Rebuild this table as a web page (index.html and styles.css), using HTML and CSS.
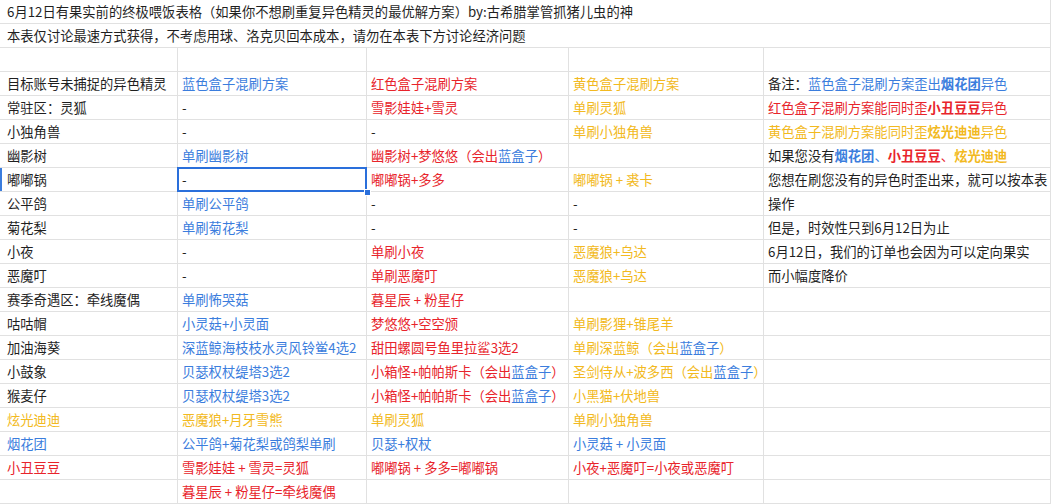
FILE: index.html
```html
<!DOCTYPE html>
<html lang="zh-CN">
<head>
<meta charset="utf-8">
<title>6月12日有果实前的终极喂饭表格</title>
<link rel="stylesheet" href="styles.css">
</head>
<body>
<div class="sheet">
  <div class="c span first">6月12日有果实前的终极喂饭表格（如果你不想刷重复异色精灵的最优解方案）by:古希腊掌管抓猪儿虫的神</div>
  <div class="c span first">本表仅讨论最速方式获得，不考虑用球、洛克贝回本成本，请勿在本表下方讨论经济问题</div>

  <div class="c first"></div><div class="c"></div><div class="c"></div><div class="c"></div><div class="c"></div>

  <div class="c first">目标账号未捕捉的异色精灵</div>
  <div class="c b">蓝色盒子混刷方案</div>
  <div class="c r">红色盒子混刷方案</div>
  <div class="c y">黄色盒子混刷方案</div>
  <div class="c">备注：<span class="b">蓝色盒子混刷方案歪出<strong>烟花团</strong>异色</span></div>

  <div class="c first">常驻区：灵狐</div>
  <div class="c">-</div>
  <div class="c r">雪影娃娃+雪灵</div>
  <div class="c y">单刷灵狐</div>
  <div class="c r">红色盒子混刷方案能同时歪<strong>小丑豆豆</strong>异色</div>

  <div class="c first">小独角兽</div>
  <div class="c">-</div>
  <div class="c">-</div>
  <div class="c y">单刷小独角兽</div>
  <div class="c y">黄色盒子混刷方案能同时歪<strong>炫光迪迪</strong>异色</div>

  <div class="c first">幽影树</div>
  <div class="c b">单刷幽影树</div>
  <div class="c r">幽影树+梦悠悠（会出<span class="b">蓝盒子</span>）</div>
  <div class="c"></div>
  <div class="c">如果您没有<strong class="b">烟花团</strong><span class="b">、</span><strong class="r">小丑豆豆</strong><span class="r">、</span><strong class="y">炫光迪迪</strong></div>

  <div class="c first active">嘟嘟锅</div>
  <div class="c selected">-</div>
  <div class="c r">嘟嘟锅+多多</div>
  <div class="c y">嘟嘟锅 + 裘卡</div>
  <div class="c">您想在刷您没有的异色时歪出来，就可以按本表</div>

  <div class="c first">公平鸽</div>
  <div class="c b">单刷公平鸽</div>
  <div class="c">-</div>
  <div class="c">-</div>
  <div class="c">操作</div>

  <div class="c first">菊花梨</div>
  <div class="c b">单刷菊花梨</div>
  <div class="c">-</div>
  <div class="c">-</div>
  <div class="c">但是，时效性只到6月12日为止</div>

  <div class="c first">小夜</div>
  <div class="c">-</div>
  <div class="c r">单刷小夜</div>
  <div class="c y">恶魔狼+乌达</div>
  <div class="c">6月12日，我们的订单也会因为可以定向果实</div>

  <div class="c first">恶魔叮</div>
  <div class="c">-</div>
  <div class="c r">单刷恶魔叮</div>
  <div class="c y">恶魔狼+乌达</div>
  <div class="c">而小幅度降价</div>

  <div class="c first">赛季奇遇区：牵线魔偶</div>
  <div class="c b">单刷怖哭菇</div>
  <div class="c r">暮星辰 + 粉星仔</div>
  <div class="c"></div>
  <div class="c"></div>

  <div class="c first">咕咕帽</div>
  <div class="c b">小灵菇+小灵面</div>
  <div class="c r">梦悠悠+空空颁</div>
  <div class="c y">单刷影狸+锥尾羊</div>
  <div class="c"></div>

  <div class="c first">加油海葵</div>
  <div class="c b">深蓝鲸海枝枝水灵风铃鲎4选2</div>
  <div class="c r">甜田螺圆号鱼里拉鲨3选2</div>
  <div class="c y">单刷深蓝鲸（会出<span class="b">蓝盒子</span>）</div>
  <div class="c"></div>

  <div class="c first">小鼓象</div>
  <div class="c b">贝瑟权杖缇塔3选2</div>
  <div class="c r">小箱怪+帕帕斯卡（会出<span class="b">蓝盒子</span>）</div>
  <div class="c y">圣剑侍从+波多西（会出<span class="b">蓝盒子</span>）</div>
  <div class="c"></div>

  <div class="c first">猴麦仔</div>
  <div class="c b">贝瑟权杖缇塔3选2</div>
  <div class="c r">小箱怪+帕帕斯卡（会出<span class="b">蓝盒子</span>）</div>
  <div class="c y">小黑猫+伏地兽</div>
  <div class="c"></div>

  <div class="c first y">炫光迪迪</div>
  <div class="c y">恶魔狼+月牙雪熊</div>
  <div class="c y">单刷灵狐</div>
  <div class="c y">单刷小独角兽</div>
  <div class="c"></div>

  <div class="c first b">烟花团</div>
  <div class="c b">公平鸽+菊花梨或鸽梨单刷</div>
  <div class="c b">贝瑟+权杖</div>
  <div class="c b">小灵菇 + 小灵面</div>
  <div class="c"></div>

  <div class="c first r">小丑豆豆</div>
  <div class="c r">雪影娃娃 + 雪灵=灵狐</div>
  <div class="c r">嘟嘟锅 + 多多=嘟嘟锅</div>
  <div class="c r">小夜+恶魔叮=小夜或恶魔叮</div>
  <div class="c"></div>

  <div class="c first"></div>
  <div class="c r">暮星辰 + 粉星仔=牵线魔偶</div>
  <div class="c"></div>
  <div class="c"></div>
  <div class="c"></div>
</div>
</body>
</html>
```

FILE: styles.css
```css
html, body {
  margin: 0;
  padding: 0;
  background: #ffffff;
}

body {
  font-family: "Noto Sans CJK SC", "Microsoft YaHei", sans-serif;
  font-size: 13.3px;
  color: #1f1f1f;
  overflow: hidden;
}

.sheet {
  display: grid;
  grid-template-columns: 178px 189px 202px 195px 287px;
  grid-auto-rows: 24px;
  width: 1051px;
}

.c {
  box-sizing: border-box;
  border-right: 1px solid #e1e1e1;
  border-bottom: 1px solid #e1e1e1;
  padding: 0 4px;
  line-height: 23px;
  white-space: nowrap;
  position: relative;
}

.c.first {
  padding-left: 7px;
}

.c.span {
  grid-column: 1 / -1;
}

.b { color: #3b7ddd; }
.r { color: #e8242b; }
.y { color: #f2b920; }

strong {
  font-weight: 700;
}

.active {
  box-shadow: inset 2px 0 0 #3b7ddd;
}

.selected::after {
  content: "";
  position: absolute;
  top: -1px;
  left: -1px;
  right: -1px;
  bottom: -1px;
  border: 2px solid #2a6fdb;
  pointer-events: none;
  z-index: 2;
}

.selected::before {
  content: "";
  position: absolute;
  right: -5px;
  bottom: -5px;
  width: 5px;
  height: 5px;
  background: #2a6fdb;
  border: 1px solid #ffffff;
  z-index: 3;
}
```
